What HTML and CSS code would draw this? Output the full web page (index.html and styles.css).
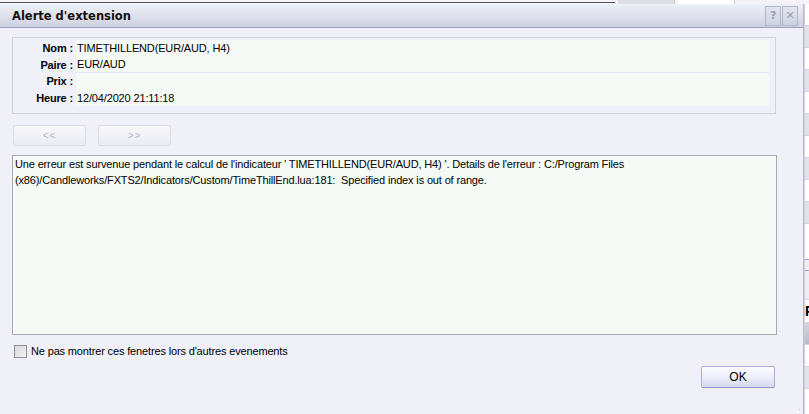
FILE: index.html
```html
<!DOCTYPE html>
<html lang="fr">
<head>
    <meta charset="UTF-8">
    <title>Alerte d'extension</title>
    <link rel="stylesheet" href="styles.css">
</head>
<body>
    <div class="backdrop-top">
        <span class="bt-line"></span>
        <span class="bt-cell grey"></span>
        <span class="bt-cell"></span>
    </div>
    <div class="screen">
        <div class="dialog">
            <div class="titlebar">
                <span class="title">Alerte d'extension</span>
                <div class="title-buttons">
                    <span class="tbtn">?</span>
                    <span class="tbtn">&#x2715;</span>
                </div>
            </div>

            <div class="content">
                <div class="details">
                    <div class="label">Nom :</div>
                    <div class="value">TIMETHILLEND(EUR/AUD, H4)</div>
                    <div class="label">Paire :</div>
                    <div class="value split">EUR/AUD</div>
                    <div class="label">Prix :</div>
                    <div class="value"></div>
                    <div class="label">Heure :</div>
                    <div class="value">12/04/2020 21:11:18</div>
                </div>

                <div class="nav">
                    <button class="nav-btn" disabled>&lt;&lt;</button>
                    <button class="nav-btn" disabled>&gt;&gt;</button>
                </div>

                <div class="message">Une erreur est survenue pendant le calcul de l'indicateur ' TIMETHILLEND(EUR/AUD, H4) '. Details de l'erreur : C:/Program Files (x86)/Candleworks/FXTS2/Indicators/Custom/TimeThillEnd.lua:181:&nbsp; Specified index is out of range.</div>

                <label class="check-row">
                    <span class="checkbox"></span>
                    Ne pas montrer ces fenetres lors d'autres evenements
                </label>

                <div class="footer">
                    <button class="ok-btn">OK</button>
                </div>
            </div>
            <span class="grip"></span>
        </div>

        <div class="side">
            <div class="side-cell"></div>
            <div class="side-cell alt"></div>
            <div class="side-cell"></div>
            <div class="side-cell alt"></div>
            <div class="side-cell"></div>
            <div class="side-cell alt"></div>
            <div class="side-cell"></div>
            <div class="side-cell alt"></div>
            <div class="side-cell"></div>
            <div class="side-cell alt"></div>
            <div class="side-cell tall"></div>
            <div class="side-cell short"></div>
            <div class="side-cell mid"></div>
            <div class="side-cell head">P</div>
            <div class="side-cell dark"></div>
            <div class="side-cell"></div>
            <div class="side-cell alt"></div>
        </div>
    </div>
</body>
</html>
```

FILE: styles.css
```css
body {
    margin: 0;
    width: 809px;
    height: 414px;
    overflow: hidden;
    background: #f0f0f6;
    font-family: "Liberation Sans", Arial, sans-serif;
    font-size: 11px;
    letter-spacing: -0.15px;
    color: #000;
}

/* strip of the application window behind the dialog */
.backdrop-top {
    display: flex;
    height: 4px;
    background: #f4f4f8;
}
.bt-line {
    width: 615px;
    height: 1px;
    margin-top: 2px;
    background: #555;
}
.bt-cell {
    width: 56px;
    margin-left: 3px;
    background: #fff;
    border-right: 1px solid #c8c8d0;
}
.bt-cell.grey {
    background: #dedfe6;
}

.screen {
    display: flex;
    height: 410px;
}

.dialog {
    position: relative;
    flex: 0 0 803px;
    display: flex;
    flex-direction: column;
    background: #eff0f8;
    border-right: 1px solid #b8bacc;
}

.titlebar {
    height: 23px;
    display: flex;
    align-items: center;
    justify-content: space-between;
    padding: 0 5px 0 12px;
    background: linear-gradient(#eef0f7, #dcdeea 60%, #cdd0e0);
    border-bottom: 1px solid #9ea1bb;
}
.title {
    font-family: "DejaVu Sans", Verdana, sans-serif;
    font-weight: bold;
    font-size: 11.5px;
    letter-spacing: 0;
    color: #111;
}
.title-buttons {
    display: flex;
    gap: 1px;
}
.tbtn {
    width: 14px;
    height: 18px;
    display: flex;
    align-items: center;
    justify-content: center;
    border: 1px solid #b4b7cc;
    background: linear-gradient(#e2e4ee, #cfd2e2);
    color: #9a9db6;
    font-family: "DejaVu Sans", sans-serif;
    font-weight: bold;
    font-size: 11px;
}

.content {
    flex: 1;
    display: flex;
    flex-direction: column;
    padding: 9px 27px 0 12px;
}

/* name / pair / price / time block */
.details {
    display: grid;
    grid-template-columns: 63px 1fr;
    grid-auto-rows: 16.5px;
    padding: 2px 6px 7px 0;
    border: 1px solid #d0d2de;
}
.label {
    display: flex;
    align-items: center;
    justify-content: flex-end;
    padding-right: 3px;
    font-weight: bold;
    white-space: pre;
}
.value {
    display: flex;
    align-items: center;
    padding-left: 1px;
    background: #f6faf6;
}
.value.split {
    border-bottom: 1px solid #e4e7f0;
}

.nav {
    display: flex;
    gap: 12px;
    margin-top: 11px;
    padding-left: 1px;
}
.nav-btn {
    width: 73px;
    height: 21px;
    border: 1px solid #dadbe4;
    border-radius: 2px;
    background: linear-gradient(#f8f8fb, #ebecf2);
    color: #b4b6c4;
    font-family: "Liberation Sans", Arial, sans-serif;
    font-size: 10px;
    letter-spacing: 1px;
    padding: 0;
}

.message {
    height: 178px;
    margin-top: 9px;
    margin-right: -1px;
    padding: 0 2px;
    border: 1px solid #a9a9b2;
    background: #f6faf6;
    line-height: 16px;
}

.check-row {
    display: flex;
    align-items: center;
    gap: 4px;
    margin-top: 8px;
    padding-left: 2px;
    height: 16px;
}
.checkbox {
    width: 11px;
    height: 11px;
    border: 1px solid #8f8f9a;
    background: linear-gradient(135deg, #d8d8de, #f4f4f6);
}

.footer {
    display: flex;
    justify-content: flex-end;
    margin-top: 7px;
    margin-right: 1px;
}
.ok-btn {
    width: 74px;
    height: 22px;
    border: 1px solid #a9acd6;
    border-bottom-color: #8e92c6;
    border-radius: 2px;
    background: linear-gradient(#fbfbfe, #eeeff8 50%, #d6d8ee);
    font-family: "Liberation Sans", Arial, sans-serif;
    font-size: 12px;
    padding: 0;
    color: #000;
}

.grip {
    position: absolute;
    right: 1px;
    bottom: 2px;
    width: 7px;
    height: 7px;
    background: radial-gradient(circle, #b8bacb 0.8px, transparent 1px) 0 0 / 3px 3px;
    clip-path: polygon(100% 0, 100% 100%, 0 100%);
}

/* grid of the application behind, visible on the right */
.side {
    flex: 1;
    min-width: 0;
    overflow: hidden;
    display: flex;
    flex-direction: column;
    background: #fff;
    border-left: 1px solid #d0d0d8;
}
.side-cell {
    flex-shrink: 0;
    height: 21px;
    border-bottom: 1px solid #d6d6de;
    background: #fff;
}
.side-cell.alt {
    background: #e2e3ea;
}
.side-cell.tall {
    height: 35px;
    border-bottom-color: #a8a8c8;
}
.side-cell.short {
    height: 10px;
    background: #eeeef4;
    border-bottom-color: #a8a8c8;
}
.side-cell.mid {
    height: 28px;
    background: #eeeef4;
}
.side-cell.head {
    height: 22px;
    font-weight: bold;
    font-size: 14px;
    line-height: 22px;
}
.side-cell.dark {
    background: linear-gradient(#d4d4e0, #b8b8cc);
}
```
